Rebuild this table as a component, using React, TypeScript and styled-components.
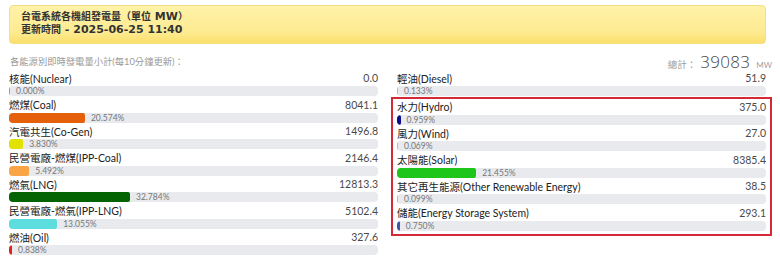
import React from 'react';
import styled, { createGlobalStyle } from 'styled-components';

type Source = {
  name: string;
  value: string;
  pct: number;
  color: string;
};

const leftSources: Source[] = [
  { name: '核能(Nuclear)', value: '0.0', pct: 0, color: '#999999' },
  { name: '燃煤(Coal)', value: '8041.1', pct: 20.574, color: '#e4600b' },
  { name: '汽電共生(Co-Gen)', value: '1496.8', pct: 3.83, color: '#e2e200' },
  { name: '民營電廠-燃煤(IPP-Coal)', value: '2146.4', pct: 5.492, color: '#f9a545' },
  { name: '燃氣(LNG)', value: '12813.3', pct: 32.784, color: '#046404' },
  { name: '民營電廠-燃氣(IPP-LNG)', value: '5102.4', pct: 13.055, color: '#5ddede' },
  { name: '燃油(Oil)', value: '327.6', pct: 0.838, color: '#e0211d' },
];

const diesel: Source = { name: '輕油(Diesel)', value: '51.9', pct: 0.133, color: '#b8b8b8' };

const renewables: Source[] = [
  { name: '水力(Hydro)', value: '375.0', pct: 0.959, color: '#0b0b8c' },
  { name: '風力(Wind)', value: '27.0', pct: 0.069, color: '#b8b8b8' },
  { name: '太陽能(Solar)', value: '8385.4', pct: 21.455, color: '#1ec51a' },
  { name: '其它再生能源(Other Renewable Energy)', value: '38.5', pct: 0.099, color: '#b8b8b8' },
  { name: '儲能(Energy Storage System)', value: '293.1', pct: 0.75, color: '#3a5aa8' },
];

const SourceRow: React.FC<{ source: Source }> = ({ source }) => (
  <Row>
    <RowHead>
      <Label>{source.name}</Label>
      <Value>{source.value}</Value>
    </RowHead>
    <Bar>
      <Fill $color={source.color} style={{ width: `${source.pct}%` }} />
      <Percent>{source.pct.toFixed(3)}%</Percent>
    </Bar>
  </Row>
);

const App: React.FC = () => {
  return (
    <>
      <GlobalStyle />
      <Page>
        <Banner>
          <div>
            台電系統各機組發電量（單位<Latin> MW</Latin>）
          </div>
          <div>
            更新時間<Latin> - 2025-06-25 11:40</Latin>
          </div>
        </Banner>
        <Columns>
          <Column>
            <ColumnHead>
              <Subtitle>各能源別即時發電量小計(每10分鐘更新)：</Subtitle>
            </ColumnHead>
            {leftSources.map((s) => (
              <SourceRow key={s.name} source={s} />
            ))}
          </Column>
          <Column>
            <ColumnHead $right>
              <TotalLabel>總計：</TotalLabel>
              <TotalValue>39083</TotalValue>
              <TotalUnit>MW</TotalUnit>
            </ColumnHead>
            <SourceRow source={diesel} />
            <Highlight>
              {renewables.map((s) => (
                <SourceRow key={s.name} source={s} />
              ))}
            </Highlight>
          </Column>
        </Columns>
      </Page>
    </>
  );
};

export default App;

const GlobalStyle = createGlobalStyle`
  body {
    margin: 0;
    background: #ffffff;
    font-family: Lato, "Noto Sans CJK TC", sans-serif;
  }
`;

const Page = styled.div`
  width: 780px;
  padding: 5px 14px 0 9px;
  box-sizing: border-box;
`;

const Banner = styled.div`
  height: 39px;
  box-sizing: border-box;
  padding: 5px 11px 0;
  border: 1px solid #f4de86;
  border-radius: 4px;
  background: linear-gradient(to bottom, #fff2a8 0%, #fdeb92 70%, #fbdf6a 100%);
  font-family: "DejaVu Sans", "Noto Sans CJK TC", sans-serif;
  font-weight: bold;
  font-size: 10px;
  line-height: 12.5px;
  color: #333333;
`;

const Latin = styled.span`
  font-size: 11px;
`;

const Columns = styled.div`
  display: grid;
  grid-template-columns: 369px 369px;
  column-gap: 19px;
  margin-top: 10px;
`;

const Column = styled.div`
  display: flex;
  flex-direction: column;
`;

const ColumnHead = styled.div<{ $right?: boolean }>`
  height: 16px;
  display: flex;
  align-items: baseline;
  justify-content: ${(p) => (p.$right ? 'flex-end' : 'flex-start')};
  line-height: 16px;
  white-space: nowrap;
`;

const Subtitle = styled.span`
  font-size: 9.3px;
  color: #9a9a9a;
  padding-left: 1px;
`;

const TotalLabel = styled.span`
  font-size: 9.5px;
  color: #9a9a9a;
  margin-right: 4px;
`;

const TotalValue = styled.span`
  font-family: "Open Sans", sans-serif;
  font-size: 17px;
  font-weight: 300;
  color: #444444;
  letter-spacing: 0.3px;
`;

const TotalUnit = styled.span`
  font-size: 8px;
  color: #a0a0a0;
  margin-left: 6px;
  margin-right: -6px;
`;

const Row = styled.div`
  display: flex;
  flex-direction: column;
  margin-bottom: 0.5px;
`;

const RowHead = styled.div`
  height: 16px;
  display: flex;
  justify-content: space-between;
  align-items: center;
  white-space: nowrap;
`;

const Label = styled.span`
  font-size: 10.5px;
  color: #222222;
`;

const Value = styled.span`
  font-size: 10.5px;
  color: #4a4a4a;
`;

const Bar = styled.div`
  height: 10px;
  display: flex;
  align-items: center;
  background: #e8eaed;
  border-radius: 4px;
  overflow: hidden;
`;

const Fill = styled.div<{ $color: string }>`
  height: 100%;
  min-width: 1px;
  flex-shrink: 0;
  background: ${(p) => p.$color};
  border-radius: 2px;
`;

const Percent = styled.span`
  font-size: 8.5px;
  color: #777777;
  margin-left: 6px;
  line-height: 10px;
`;

const Highlight = styled.div`
  margin: 0 -6px;
  padding: 0 4px 3px;
  border: 2px solid #d42a38;
  display: flex;
  flex-direction: column;
`;
